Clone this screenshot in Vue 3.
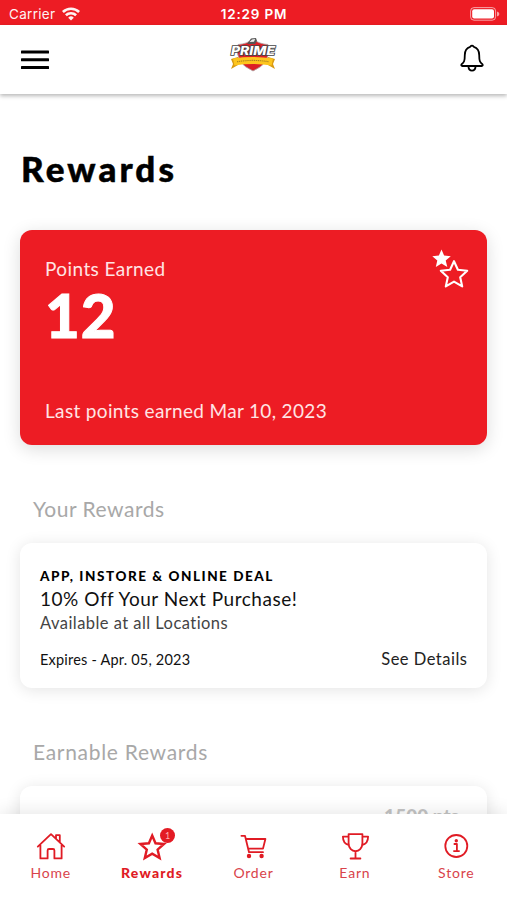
<script setup>
const tabs = [
  { id: 'home', label: 'Home' },
  { id: 'rewards', label: 'Rewards', active: true, badge: 1 },
  { id: 'order', label: 'Order' },
  { id: 'earn', label: 'Earn' },
  { id: 'store', label: 'Store' },
]
</script>

<template>
  <div class="screen">
    <div class="status">
      <div class="carrier">
        <span>Carrier</span>
        <svg width="18" height="14" viewBox="0 0 18 14" fill="none" stroke="#fff" stroke-width="2.6">
          <path d="M0.9 5A11.6 11.6 0 0 1 17.1 5" />
          <path d="M3.9 8.3A7.3 7.3 0 0 1 14.1 8.3" />
          <path d="M6.2 10.7A4 4 0 0 1 11.8 10.7L9 13.6Z" fill="#fff" stroke="none" />
        </svg>
      </div>
      <span class="time">12:29 PM</span>
      <svg class="battery" width="30" height="14" viewBox="0 0 30 14">
        <rect x="0.6" y="0.6" width="25" height="12.6" rx="3.4" fill="none" stroke="#fff" stroke-opacity=".6" />
        <rect x="2.2" y="2.2" width="21.8" height="9.4" rx="2" fill="#fff" />
        <path d="M27 4.6Q29.4 5.4 29.4 7T27 9.4Z" fill="#fff" fill-opacity=".6" />
      </svg>
    </div>

    <header class="header">
      <svg width="28" height="20" viewBox="0 0 28 20" fill="#000">
        <rect y="0.6" width="28" height="3" rx=".6" />
        <rect y="8.3" width="28" height="3" rx=".6" />
        <rect y="16" width="28" height="3" rx=".6" />
      </svg>
      <svg class="logo" width="48" height="36" viewBox="0 0 48 36">
        <path d="M9 7.5Q18 7 24 2Q30 7 39 7.5Q43 26 24 34Q5 26 9 7.5Z" fill="#dc1f27" stroke="#aaa" stroke-width=".8" />
        <path d="M18 7L22 1.5L27 1L28 4L26 7Z" fill="#555" />
        <path d="M20.5 5L23 2.4L26.2 2L25 4.8Z" fill="#eee" />
        <path d="M2 22L9 20V28L2 32L4 27ZM46 22L39 20V28L46 32L44 27Z" fill="#d99a12" />
        <path d="M4 21.4Q24 18.6 44 21.4L42.6 28.4Q24 25.6 5.4 28.4Z" fill="#fdc51d" />
        <path d="M8 24.8Q24 22 40 24.8" fill="none" stroke="#a98022" stroke-width="1.1" stroke-dasharray="1.2 .7" />
        <text x="2" y="18" textLength="44" lengthAdjust="spacingAndGlyphs" class="logo-text">PRIME</text>
      </svg>
      <svg class="bell" width="24" height="28" viewBox="0 0 24 28" fill="none" stroke="#000" stroke-width="1.8" stroke-linejoin="round">
        <path d="M10.2 2.8Q12 0.6 13.8 2.8C17.5 3.9 19.2 7 19.2 11C19.2 17 20 18.5 22.4 20.2Q23.4 21.8 21.6 22H2.4Q0.6 21.8 1.6 20.2C4 18.5 4.8 17 4.8 11C4.8 7 6.5 3.9 10.2 2.8Z" />
        <path d="M8.4 22.4C8.8 28 15.2 28 15.6 22.4" />
      </svg>
    </header>

    <main class="content">
      <h1>Rewards</h1>

      <section class="points">
        <div class="points-label">Points Earned</div>
        <div class="points-value">12</div>
        <div class="points-last">Last points earned Mar 10, 2023</div>
        <svg class="stars" width="38" height="40" viewBox="0 0 38 40">
          <path d="M9.5 .5L12.1 6.6L18.8 7.2L13.7 11.6L15.3 18L9.5 14.6L3.8 18L5.3 11.6L.3 7.2L6.9 6.6Z" fill="#fff" />
          <path d="M22 12.2L25.9 20.8L35.2 21.8L28.2 28.2L30.2 37.4L22 32.6L13.8 37.4L15.8 28.2L8.8 21.8L18.1 20.8Z" fill="#ed1c24" stroke="#fff" stroke-width="2.1" stroke-linejoin="round" />
        </svg>
      </section>

      <h2>Your Rewards</h2>
      <section class="card">
        <div class="kind">APP, INSTORE &amp; ONLINE DEAL</div>
        <div class="deal">10% Off Your Next Purchase!</div>
        <div class="where">Available at all Locations</div>
        <div class="card-foot">
          <span class="expires">Expires - Apr. 05, 2023</span>
          <span class="details">See Details</span>
        </div>
      </section>

      <h2 class="earnable">Earnable Rewards</h2>
      <section class="card next"><span class="cost">1500 pts</span></section>
    </main>

    <nav class="tabs">
      <div v-for="tab in tabs" :key="tab.id" class="tab" :class="{ active: tab.active }">
        <div class="icon">
          <svg width="40" height="32" viewBox="0 0 40 32" fill="none" stroke="#e01b24" stroke-width="1.8" stroke-linejoin="round" stroke-linecap="round">
            <template v-if="tab.id === 'home'">
              <path d="M6.8 16.6L20 4.2L33.2 16.6M9.4 15V28.4H16.6V20.4Q16.6 19 18 19H22Q23.4 19 23.4 20.4V28.4H30.6V15M25 8.5V5.2H28.8V12" />
            </template>
            <path v-else-if="tab.id === 'rewards'" stroke-width="2.4" stroke-linejoin="miter" d="M20.2 5.5L23.5 13.3L32 14L25.6 19.6L27.6 28L20.2 23.6L12.8 28L14.8 19.6L8.4 14L16.9 13.3Z" />
            <template v-else-if="tab.id === 'order'">
              <path d="M8.4 5.8H12L16 22.2H30M13 9H32.4L30 18.6H15.4" />
              <circle cx="16" cy="26" r="1.3" fill="#e01b24" />
              <circle cx="28.6" cy="26" r="1.3" fill="#e01b24" />
            </template>
            <template v-else-if="tab.id === 'earn'">
              <path d="M13.6 4.1H27.4V13C27.4 24 13.6 24 13.6 13ZM13.6 6.6H7.9C7.9 11.5 9.5 14.2 14 15.2M27.4 6.6H33.1C33.1 11.5 31.5 14.2 27 15.2M20.5 21.4V28.5M15.6 28.5H25.4" />
            </template>
            <template v-else>
              <circle cx="20.3" cy="16" r="11" />
              <path stroke-linecap="butt" d="M17.7 14H20.9V21M17.3 21.2H23.7" />
              <circle cx="20.3" cy="10.7" r=".8" fill="#e01b24" />
            </template>
          </svg>
          <span v-if="tab.badge" class="badge">{{ tab.badge }}</span>
        </div>
        <span class="tab-label">{{ tab.label }}</span>
      </div>
    </nav>
  </div>
</template>

<style>
body { background: #fff; }
</style>

<style scoped>
.screen { width: 507px; height: 900px; overflow: hidden; display: flex; flex-direction: column; background: #fff; font-family: Lato, "Open Sans", sans-serif; color: #000; white-space: nowrap; }
.status { flex: none; height: 25px; box-sizing: border-box; padding: 2px 7px 0 9px; background: #ed1c24; color: #fff; display: grid; grid-template-columns: 1fr auto 1fr; align-items: center; font-family: Inter, sans-serif; font-size: 13.5px; }
.carrier { display: flex; align-items: center; gap: 7px; opacity: .95; letter-spacing: .3px; }
.time { font-weight: 600; letter-spacing: .8px; margin-right: 1px; }
.battery { justify-self: end; }
.header { flex: none; height: 69px; box-sizing: border-box; padding: 0 23px 0 21px; display: grid; grid-template-columns: 1fr auto 1fr; align-items: center; box-shadow: 0 2px 4px rgba(0, 0, 0, .28); background: #fff; z-index: 1; }
.logo { margin-bottom: 9px; }
.logo-text { font: italic 800 11.5px Inter, sans-serif; fill: #fff; stroke: #444; stroke-width: 1.5px; paint-order: stroke; }
.bell { justify-self: end; margin-bottom: 3px; }
.content { flex: none; height: 720px; overflow: hidden; box-sizing: border-box; padding: 54px 20px 0; }
h1 { margin: 0 0 41px 1px; font-size: 35px; line-height: 41px; font-weight: 900; letter-spacing: 3.1px; -webkit-text-stroke: .5px #000; }
.points { position: relative; height: 215px; box-sizing: border-box; padding: 27px 25px 0; border-radius: 12px; background: #ed1c24; color: #fff; box-shadow: 0 4px 18px rgba(0, 0, 0, .14); }
.points-label, .points-last { font-size: 19px; line-height: 24px; color: #ffe4e4; letter-spacing: .42px; }
.points-value { font-size: 60px; line-height: 60px; font-weight: 900; letter-spacing: 1px; margin-top: 4px; -webkit-text-stroke: 1px #fff; }
.points-last { margin-top: 54px; letter-spacing: .34px; }
.stars { position: absolute; right: 17px; top: 19px; }
h2 { margin: 49px 0 19px 13px; font-size: 21px; line-height: 30px; font-weight: 400; color: #a8a8a8; letter-spacing: .52px; }
.card { height: 145px; box-sizing: border-box; padding: 24px 20px 0; border-radius: 12px; background: #fff; box-shadow: 0 2px 16px rgba(0, 0, 0, .11); }
.kind { font-size: 13.5px; line-height: 18px; font-weight: 900; letter-spacing: 1.55px; }
.deal { margin-top: 1px; font-size: 19px; line-height: 26px; letter-spacing: .53px; color: #111; }
.where { font-size: 16.5px; line-height: 22px; letter-spacing: .45px; color: #444; }
.card-foot { display: flex; justify-content: space-between; align-items: baseline; line-height: 24px; margin-top: 13px; }
.expires { font-size: 14.5px; letter-spacing: .2px; color: #111; }
.details { font-size: 16.5px; letter-spacing: .5px; margin-right: -.5px; color: #222; }
h2.earnable { margin-top: 49px; margin-bottom: 19px; letter-spacing: .7px; }
.next { text-align: right; padding-right: 28px; padding-top: 18px; }
.cost { font-size: 19px; line-height: 24px; font-weight: 900; color: #c4c4c4; }
.tabs { flex: none; position: relative; height: 86px; display: grid; grid-template-columns: repeat(5, 1fr); background: #fff; box-shadow: 0 -3px 16px rgba(0, 0, 0, .09); }
.tab { display: flex; flex-direction: column; align-items: center; padding-top: 16px; color: #d9434b; }
.icon { position: relative; width: 40px; height: 32px; }
.icon svg { display: block; }
.badge { position: absolute; left: 28px; top: -2px; width: 15px; height: 15px; border-radius: 50%; background: #e31b24; color: #ffb0b0; font-size: 9px; line-height: 15px; text-align: center; }
.tab-label { font-size: 14px; line-height: 22px; letter-spacing: .8px; }
.active .tab-label { font-weight: 900; color: #e01b24; letter-spacing: 1.2px; }
</style>
